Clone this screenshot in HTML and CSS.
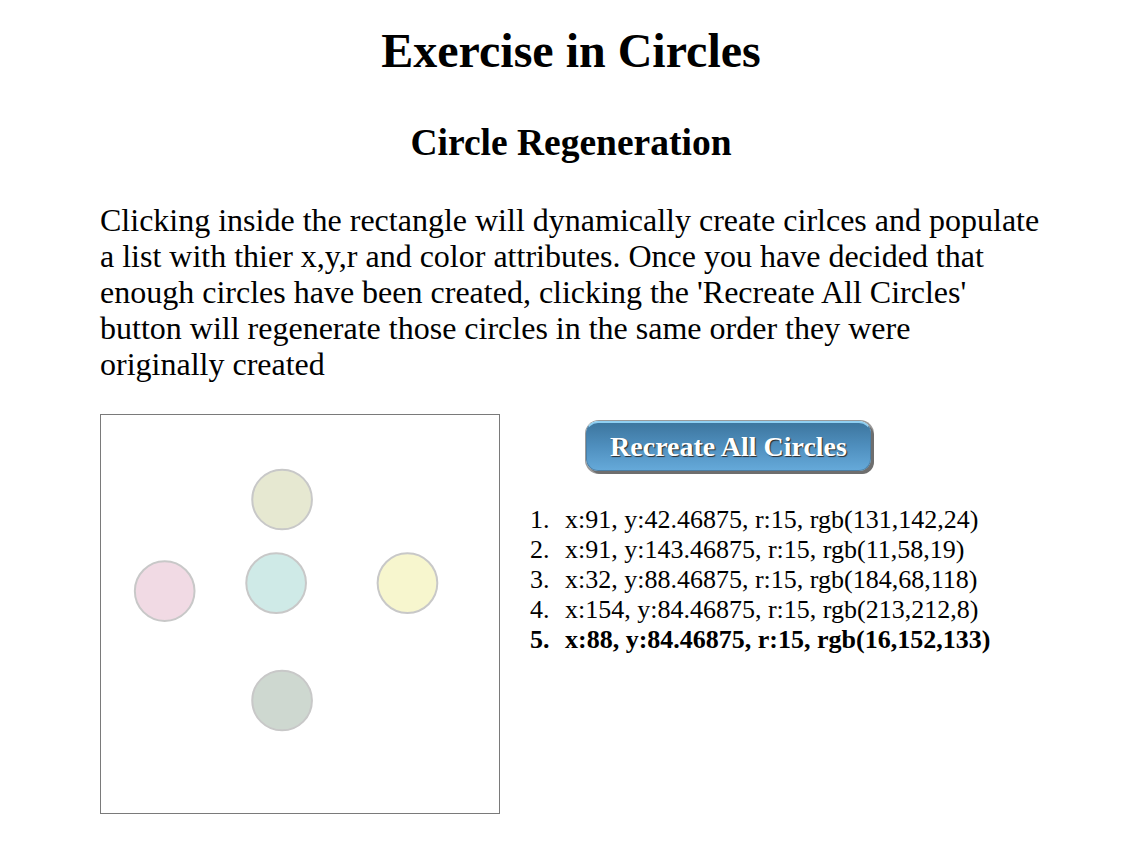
FILE: index.html
```html
<!DOCTYPE html>
<html lang="en">
<head>
<meta charset="utf-8">
<title>Exercise in Circles</title>
<link rel="stylesheet" href="styles.css">
</head>
<body>
<div class="page">
  <h1 class="title">Exercise in Circles</h1>
  <h2 class="subtitle">Circle Regeneration</h2>
  <p class="intro">Clicking inside the rectangle will dynamically create cirlces and populate a list with thier x,y,r and color attributes. Once you have decided that enough circles have been created, clicking the 'Recreate All Circles' button will regenerate those circles in the same order they were originally created</p>
  <div class="main">
    <div class="board">
      <svg class="board-svg" viewBox="0 0 200 200" width="398" height="398">
        <circle cx="91" cy="42.46875" r="15" fill="rgb(131,142,24)" fill-opacity="0.2" stroke="#c8c8c8" stroke-width="1"/>
        <circle cx="91" cy="143.46875" r="15" fill="rgb(11,58,19)" fill-opacity="0.2" stroke="#c8c8c8" stroke-width="1"/>
        <circle cx="32" cy="88.46875" r="15" fill="rgb(184,68,118)" fill-opacity="0.2" stroke="#c8c8c8" stroke-width="1"/>
        <circle cx="154" cy="84.46875" r="15" fill="rgb(213,212,8)" fill-opacity="0.2" stroke="#c8c8c8" stroke-width="1"/>
        <circle cx="88" cy="84.46875" r="15" fill="rgb(16,152,133)" fill-opacity="0.2" stroke="#c8c8c8" stroke-width="1"/>
      </svg>
    </div>
    <div class="side">
      <button class="recreate" type="button">Recreate All Circles</button>
      <ol class="circle-list">
        <li><span class="num">1.</span>x:91, y:42.46875, r:15, rgb(131,142,24)</li>
        <li><span class="num">2.</span>x:91, y:143.46875, r:15, rgb(11,58,19)</li>
        <li><span class="num">3.</span>x:32, y:88.46875, r:15, rgb(184,68,118)</li>
        <li><span class="num">4.</span>x:154, y:84.46875, r:15, rgb(213,212,8)</li>
        <li class="current"><span class="num">5.</span>x:88, y:84.46875, r:15, rgb(16,152,133)</li>
      </ol>
    </div>
  </div>
</div>
</body>
</html>
```

FILE: styles.css
```css
html, body {
  margin: 0;
  padding: 0;
  background: #ffffff;
}

body {
  font-family: "Liberation Serif", "Times New Roman", serif;
  color: #000000;
}

.page {
  width: 942px;
  margin-left: 100px;
}

.title {
  margin: 0;
  padding-top: 23px;
  font-size: 48px;
  line-height: 56px;
  font-weight: bold;
  text-align: center;
}

.subtitle {
  margin: 43px 0 0 0;
  font-size: 37.5px;
  line-height: 42px;
  font-weight: bold;
  text-align: center;
}

.intro {
  margin: 38px 0 0 0;
  font-size: 32px;
  line-height: 36px;
}

.main {
  display: flex;
  align-items: flex-start;
  margin-top: 32px;
}

.board {
  width: 398px;
  height: 398px;
  border: 1px solid #7a7a7a;
  flex: none;
}

.board-svg {
  display: block;
}

.side {
  flex: 1;
  display: flex;
  flex-direction: column;
  align-items: flex-start;
}

.recreate {
  margin: 7px 0 0 86px;
  width: 285px;
  height: 50px;
  padding: 0;
  border: 1px solid #4a7fa6;
  border-top: 2px solid #8fcff2;
  border-radius: 12px;
  background: linear-gradient(to bottom, #3d769f 0%, #4f8fbe 50%, #65a9d9 100%);
  box-shadow: 3px 3px 0 #6e6e6e, 1px 1px 0 2px #9a9a9a;
  color: #ffffff;
  font-family: "Liberation Serif", "Times New Roman", serif;
  font-size: 28px;
  font-weight: bold;
  text-shadow: 1px 1px 1px #2a2a2a;
}

.circle-list {
  list-style: none;
  margin: 34px 0 0 0;
  padding: 0 0 0 30px;
  font-size: 26px;
  line-height: 30px;
  white-space: nowrap;
}

.circle-list li {
  display: flex;
}

.num {
  width: 35px;
  flex: none;
}

.current {
  font-weight: bold;
}
```
